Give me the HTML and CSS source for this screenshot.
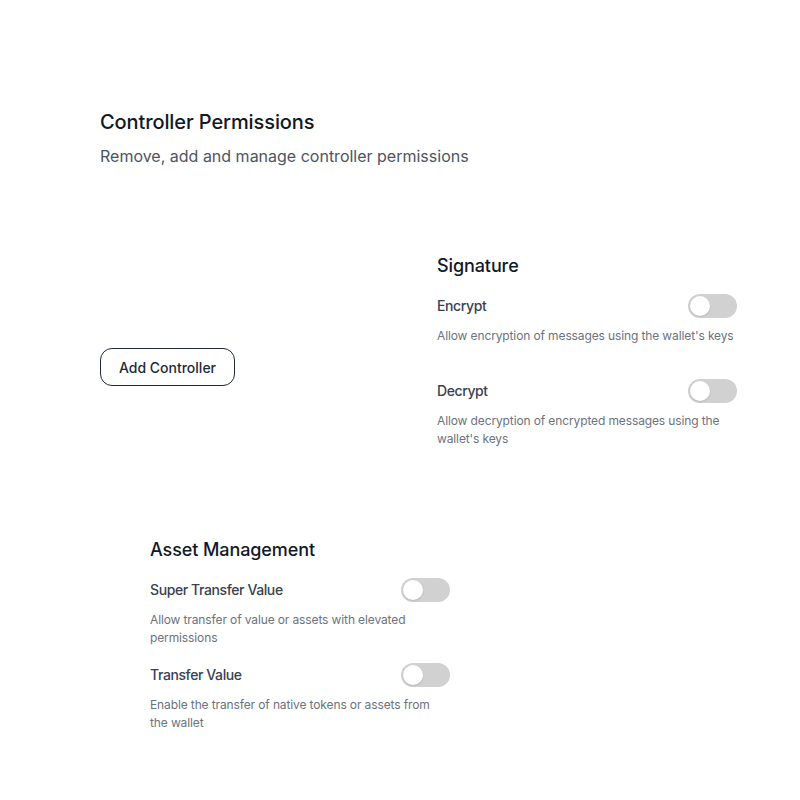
FILE: index.html
```html
<!DOCTYPE html>
<html lang="en">
<head>
<meta charset="utf-8">
<title>Controller Permissions</title>
<link rel="stylesheet" href="styles.css">
</head>
<body>
<main class="page">
  <header class="page-header">
    <h1 class="title">Controller Permissions</h1>
    <p class="subtitle">Remove, add and manage controller permissions</p>
  </header>

  <section class="row-top">
    <div class="btn-cell">
      <button class="btn-outline" type="button">Add Controller</button>
    </div>
    <div class="group group-padded">
      <h2 class="group-title">Signature</h2>
      <div class="items">
        <div class="item">
          <div class="item-row">
            <span class="item-label">Encrypt</span>
            <span class="toggle"><span class="knob"></span></span>
          </div>
          <p class="item-desc">Allow encryption of messages using the wallet's keys</p>
        </div>
        <div class="item">
          <div class="item-row">
            <span class="item-label">Decrypt</span>
            <span class="toggle"><span class="knob"></span></span>
          </div>
          <p class="item-desc">Allow decryption of encrypted messages using the wallet's keys</p>
        </div>
      </div>
    </div>
  </section>

  <section class="row-bottom">
    <div class="group">
      <h2 class="group-title">Asset Management</h2>
      <div class="items">
        <div class="item">
          <div class="item-row">
            <span class="item-label">Super Transfer Value</span>
            <span class="toggle"><span class="knob"></span></span>
          </div>
          <p class="item-desc">Allow transfer of value or assets with elevated permissions</p>
        </div>
        <div class="item">
          <div class="item-row">
            <span class="item-label">Transfer Value</span>
            <span class="toggle"><span class="knob"></span></span>
          </div>
          <p class="item-desc">Enable the transfer of native tokens or assets from the wallet</p>
        </div>
      </div>
    </div>
  </section>
</main>
</body>
</html>
```

FILE: styles.css
```css
* { box-sizing: border-box; }
html, body { margin: 0; padding: 0; background: #ffffff; }
body {
  font-family: Inter, "Noto Sans", "Liberation Sans", sans-serif;
  color: #111827;
}
.page {
  padding: 108px 0 0 100px;
}
.title {
  margin: 0;
  font-size: 20px;
  line-height: 28px;
  font-weight: 500;
  color: #111827;
  letter-spacing: -0.1px;
}
.subtitle {
  margin: 8px 0 0;
  font-size: 16px;
  line-height: 24px;
  font-weight: 400;
  color: #4b5563;
}
.row-top {
  margin-top: 84px;
  display: grid;
  grid-template-columns: 337px 300px;
  align-items: center;
}
.btn-cell { display: flex; align-items: center; padding-top: 2px; }
.btn-outline {
  font-family: inherit;
  height: 38px;
  width: 135px;
  padding: 0;
  border: 1px solid #1e293b;
  border-radius: 12px;
  background: #ffffff;
  color: #1f2937;
  font-size: 14px;
  font-weight: 500;
  letter-spacing: 0;
}
.group { width: 300px; }
.group-padded { padding-bottom: 32px; }
.group-title {
  margin: 0;
  font-size: 18px;
  line-height: 28px;
  font-weight: 500;
  color: #111827;
  letter-spacing: -0.1px;
}
.items {
  margin-top: 14px;
  display: flex;
  flex-direction: column;
  gap: 16px;
}
.item-row {
  display: flex;
  align-items: center;
  justify-content: space-between;
  height: 24px;
}
.item-label {
  font-size: 14px;
  line-height: 20px;
  font-weight: 500;
  color: #374151;
  letter-spacing: -0.4px;
}
.item-desc {
  margin: 9px 0 0;
  min-height: 36px;
  font-size: 12px;
  line-height: 18px;
  color: #6b7280;
  letter-spacing: -0.12px;
}
.toggle {
  position: relative;
  display: inline-block;
  width: 49px;
  height: 24px;
  border-radius: 12px;
  background: #d1d1d1;
}
.knob {
  position: absolute;
  top: 2px;
  left: 2px;
  width: 20px;
  height: 20px;
  border-radius: 50%;
  background: #ffffff;
  box-shadow: 0 1px 2px rgba(0,0,0,0.12);
}
.row-bottom {
  margin-top: 56px;
  padding-left: 50px;
}
```
